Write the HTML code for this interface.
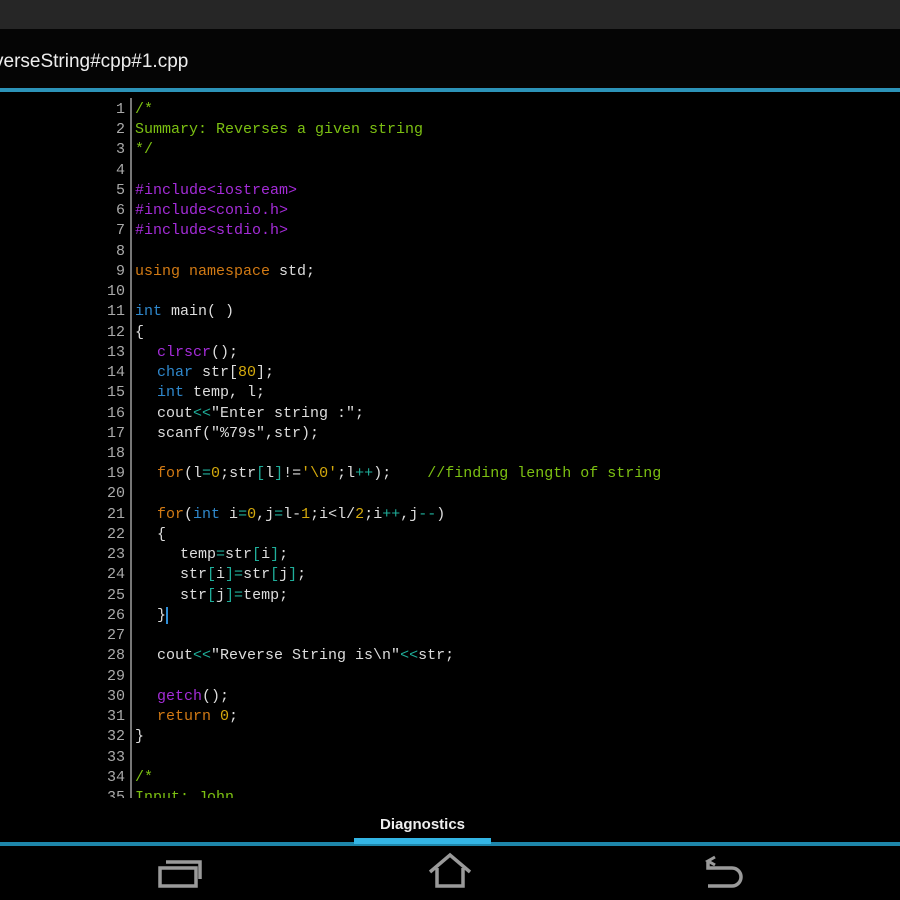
<!DOCTYPE html>
<html><head><meta charset="utf-8"><style>
body{margin:0;width:900px;height:900px;background:#000;overflow:hidden;position:relative;font-family:"Liberation Sans",sans-serif}
#status{position:absolute;left:0;top:0;width:900px;height:29px;background:#262626}
#title{position:absolute;left:0;top:29px;width:900px;height:59px;background:#050505;color:#eee;font-size:19px;line-height:66px;text-indent:-6px}
#bl1{position:absolute;left:0;top:88px;width:900px;height:4px;background:#2c93b8}
#gut{position:absolute;left:130px;top:98px;width:2px;height:700px;background:#777}
#nums{position:absolute;left:80px;width:45px;top:100px;text-align:right;color:#aaa}
#code{position:absolute;left:135px;top:100px;color:#ddd;white-space:pre}
#nums,#code{font-family:"Liberation Mono",monospace;font-size:15px;line-height:20.24px;height:698px;overflow:hidden}
.c{color:#7cc012}.p{color:#a42cd8}.o{color:#d27a14}.b{color:#2f88cc}.t{color:#1fae9a}.y{color:#d4a90c}
.i1{padding-left:22px}.i2{padding-left:45px}
#diag{position:absolute;left:354px;width:137px;top:816px;text-align:center;color:#eee;font-size:15px;font-weight:bold}
#bl2{position:absolute;left:0;top:842px;width:900px;height:4px;background:#1e86aa}
#tab{position:absolute;left:354px;top:838px;width:137px;height:6px;background:#33b5e5}
</style></head><body>
<div id="status"></div>
<div id="title">verseString#cpp#1.cpp</div>
<div id="bl1"></div>
<div id="gut"></div>
<div id="nums"><div>1</div><div>2</div><div>3</div><div>4</div><div>5</div><div>6</div><div>7</div><div>8</div><div>9</div><div>10</div><div>11</div><div>12</div><div>13</div><div>14</div><div>15</div><div>16</div><div>17</div><div>18</div><div>19</div><div>20</div><div>21</div><div>22</div><div>23</div><div>24</div><div>25</div><div>26</div><div>27</div><div>28</div><div>29</div><div>30</div><div>31</div><div>32</div><div>33</div><div>34</div><div>35</div></div>
<div id="code"><div class="c">/*</div><div class="c">Summary: Reverses a given string</div><div class="c">*/</div><div> </div><div class="p">#include&lt;iostream&gt;</div><div class="p">#include&lt;conio.h&gt;</div><div class="p">#include&lt;stdio.h&gt;</div><div> </div><div><span class="o">using namespace</span> std;</div><div> </div><div><span class="b">int</span> main( )</div><div>{</div><div class="i1"><span class="p">clrscr</span>();</div><div class="i1"><span class="b">char</span> str[<span class="y">80</span>];</div><div class="i1"><span class="b">int</span> temp, l;</div><div class="i1">cout<span class="t">&lt;&lt;</span>"Enter string :";</div><div class="i1">scanf("%79s",str);</div><div> </div><div class="i1"><span class="o">for</span>(l<span class="t">=</span><span class="y">0</span>;str<span class="t">[</span>l<span class="t">]</span>!=<span class="y">'\0'</span>;l<span class="t">++</span>);    <span class="c">//finding length of string</span></div><div> </div><div class="i1"><span class="o">for</span>(<span class="b">int</span> i<span class="t">=</span><span class="y">0</span>,j<span class="t">=</span>l-<span class="y">1</span>;i&lt;l/<span class="y">2</span>;i<span class="t">++</span>,j<span class="t">--</span>)</div><div class="i1">{</div><div class="i2">temp<span class="t">=</span>str<span class="t">[</span>i<span class="t">]</span>;</div><div class="i2">str<span class="t">[</span>i<span class="t">]=</span>str<span class="t">[</span>j<span class="t">]</span>;</div><div class="i2">str<span class="t">[</span>j<span class="t">]=</span>temp;</div><div class="i1">}<span style="border-left:2px solid #2f8fd8"></span></div><div> </div><div class="i1">cout<span class="t">&lt;&lt;</span>"Reverse String is\n"<span class="t">&lt;&lt;</span>str;</div><div> </div><div class="i1"><span class="p">getch</span>();</div><div class="i1"><span class="o">return</span> <span class="y">0</span>;</div><div>}</div><div> </div><div class="c">/*</div><div class="c">Input: John</div></div>
<div id="diag">Diagnostics</div>
<div id="bl2"></div>
<div id="tab"></div>
<svg style="position:absolute;left:0;top:846px" width="900" height="54">
<g fill="none" stroke="#9a9a9a" stroke-width="3.5">
<rect x="160" y="22" width="36" height="18"/>
<path d="M166 16h34v17"/>
<path d="M430 26l20-17 20 17M437 22v18h26v-18"/>
<path d="M708 15v7h24a9 9 0 0 1 0 18h-24"/>
<path d="M715 11l-7 4 7 4" stroke-width="3"/>
</g></svg>
</body></html>
